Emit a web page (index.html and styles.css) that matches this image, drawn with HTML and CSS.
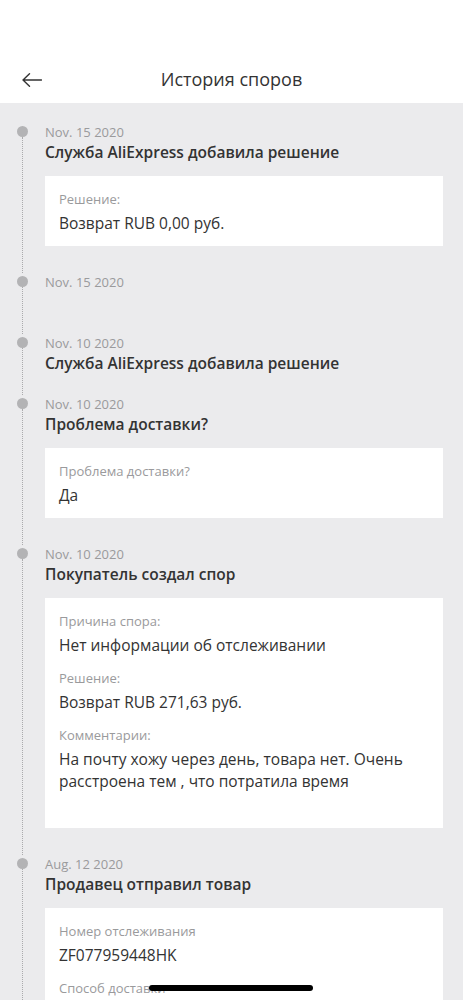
FILE: index.html
```html
<!DOCTYPE html>
<html lang="ru">
<head>
    <meta charset="UTF-8">
    <meta name="viewport" content="width=device-width, initial-scale=1.0">
    <title>История споров</title>
    <link rel="stylesheet" href="styles.css">
</head>
<body>

    <div class="screen">
        <div class="header">
            <div class="nav-row">
                <button class="back-btn" aria-label="Назад">
                    <svg width="20" height="14" viewBox="0 0 20 14" fill="none" stroke="#333" stroke-width="1.4" stroke-linecap="round" stroke-linejoin="round">
                        <path d="M19.5 7H1M7.5 0.8L1 7l6.5 6.2"/>
                    </svg>
                </button>
                <h1 class="page-title">История споров</h1>
            </div>
        </div>

        <div class="timeline">

            <div class="event">
                <div class="rail"><span class="dot"></span><span class="line"></span></div>
                <div class="event-body">
                    <div class="event-date">Nov. 15 2020</div>
                    <div class="event-title">Служба AliExpress добавила решение</div>
                    <div class="card">
                        <div class="field">
                            <div class="field-label">Решение:</div>
                            <div class="field-value">Возврат RUB 0,00 руб.</div>
                        </div>
                    </div>
                </div>
            </div>

            <div class="event">
                <div class="rail"><span class="dot"></span><span class="line"></span></div>
                <div class="event-body">
                    <div class="event-date">Nov. 15 2020</div>
                    <div class="event-title"></div>
                </div>
            </div>

            <div class="event">
                <div class="rail"><span class="dot"></span><span class="line"></span></div>
                <div class="event-body">
                    <div class="event-date">Nov. 10 2020</div>
                    <div class="event-title">Служба AliExpress добавила решение</div>
                </div>
            </div>

            <div class="event">
                <div class="rail"><span class="dot"></span><span class="line"></span></div>
                <div class="event-body">
                    <div class="event-date">Nov. 10 2020</div>
                    <div class="event-title">Проблема доставки?</div>
                    <div class="card">
                        <div class="field">
                            <div class="field-label">Проблема доставки?</div>
                            <div class="field-value">Да</div>
                        </div>
                    </div>
                </div>
            </div>

            <div class="event">
                <div class="rail"><span class="dot"></span><span class="line"></span></div>
                <div class="event-body">
                    <div class="event-date">Nov. 10 2020</div>
                    <div class="event-title">Покупатель создал спор</div>
                    <div class="card">
                        <div class="field">
                            <div class="field-label">Причина спора:</div>
                            <div class="field-value">Нет информации об отслеживании</div>
                        </div>
                        <div class="field">
                            <div class="field-label">Решение:</div>
                            <div class="field-value">Возврат RUB 271,63 руб.</div>
                        </div>
                        <div class="field">
                            <div class="field-label">Комментарии:</div>
                            <div class="field-value comment">На почту хожу через день, товара нет. Очень расстроена тем , что потратила время</div>
                        </div>
                    </div>
                </div>
            </div>

            <div class="event">
                <div class="rail"><span class="dot"></span><span class="line"></span></div>
                <div class="event-body">
                    <div class="event-date">Aug. 12 2020</div>
                    <div class="event-title">Продавец отправил товар</div>
                    <div class="card card-open">
                        <div class="field">
                            <div class="field-label">Номер отслеживания</div>
                            <div class="field-value">ZF077959448HK</div>
                        </div>
                        <div class="field">
                            <div class="field-label">Способ доставки</div>
                        </div>
                    </div>
                </div>
            </div>

        </div>

        <div class="home-indicator"></div>
    </div>

</body>
</html>
```

FILE: styles.css
```css
* {
    box-sizing: border-box;
}
body {
    margin: 0;
    font-family: "Open Sans", "Noto Sans", sans-serif;
    color: #333;
    background-color: #ebebed;
}
.screen {
    position: relative;
    height: 100vh;
    overflow: hidden;
    background-color: #ebebed;
}
.header {
    height: 103px;
    padding-top: 57px;
    background-color: #fff;
}
.nav-row {
    position: relative;
    height: 44px;
    display: flex;
    align-items: center;
    justify-content: center;
}
.back-btn {
    position: absolute;
    left: 22px;
    top: 16px;
    padding: 0;
    border: none;
    background: none;
    display: flex;
}
.page-title {
    margin: 0;
    font-size: 18px;
    font-weight: 400;
    color: #333;
}
.timeline {
    padding: 20px 20px 0 0;
}
.event {
    display: flex;
}
.rail {
    width: 45px;
    flex-shrink: 0;
    display: flex;
    flex-direction: column;
    align-items: center;
    padding-right: 1px;
}
.dot {
    width: 11px;
    height: 11px;
    margin-top: 3px;
    border-radius: 50%;
    background-color: #b3b3b5;
    flex-shrink: 0;
}
.line {
    flex: 1;
    border-left: 1px dotted #aaaaac;
}
.event-body {
    flex: 1;
    padding-bottom: 21px;
}
.event-date {
    font-size: 13px;
    line-height: 18px;
    color: #9a9a9c;
}
.event-title {
    min-height: 22px;
    font-size: 15.5px;
    line-height: 22px;
    font-weight: 600;
    color: #333;
}
.card {
    margin: 13px 0 6px;
    padding: 14px 14px 12px;
    background-color: #fff;
}
.card-open {
    padding-bottom: 40px;
}
.field + .field {
    margin-top: 13px;
}
.field-label {
    font-size: 13px;
    line-height: 18px;
    color: #9a9a9c;
    margin-bottom: 4px;
}
.field-value {
    font-size: 15.5px;
    line-height: 22px;
    color: #333;
}
.comment {
    margin-bottom: 24px;
}
.home-indicator {
    position: absolute;
    left: 149px;
    bottom: 9px;
    width: 164px;
    height: 6px;
    border-radius: 3px;
    background-color: #000;
}
```
